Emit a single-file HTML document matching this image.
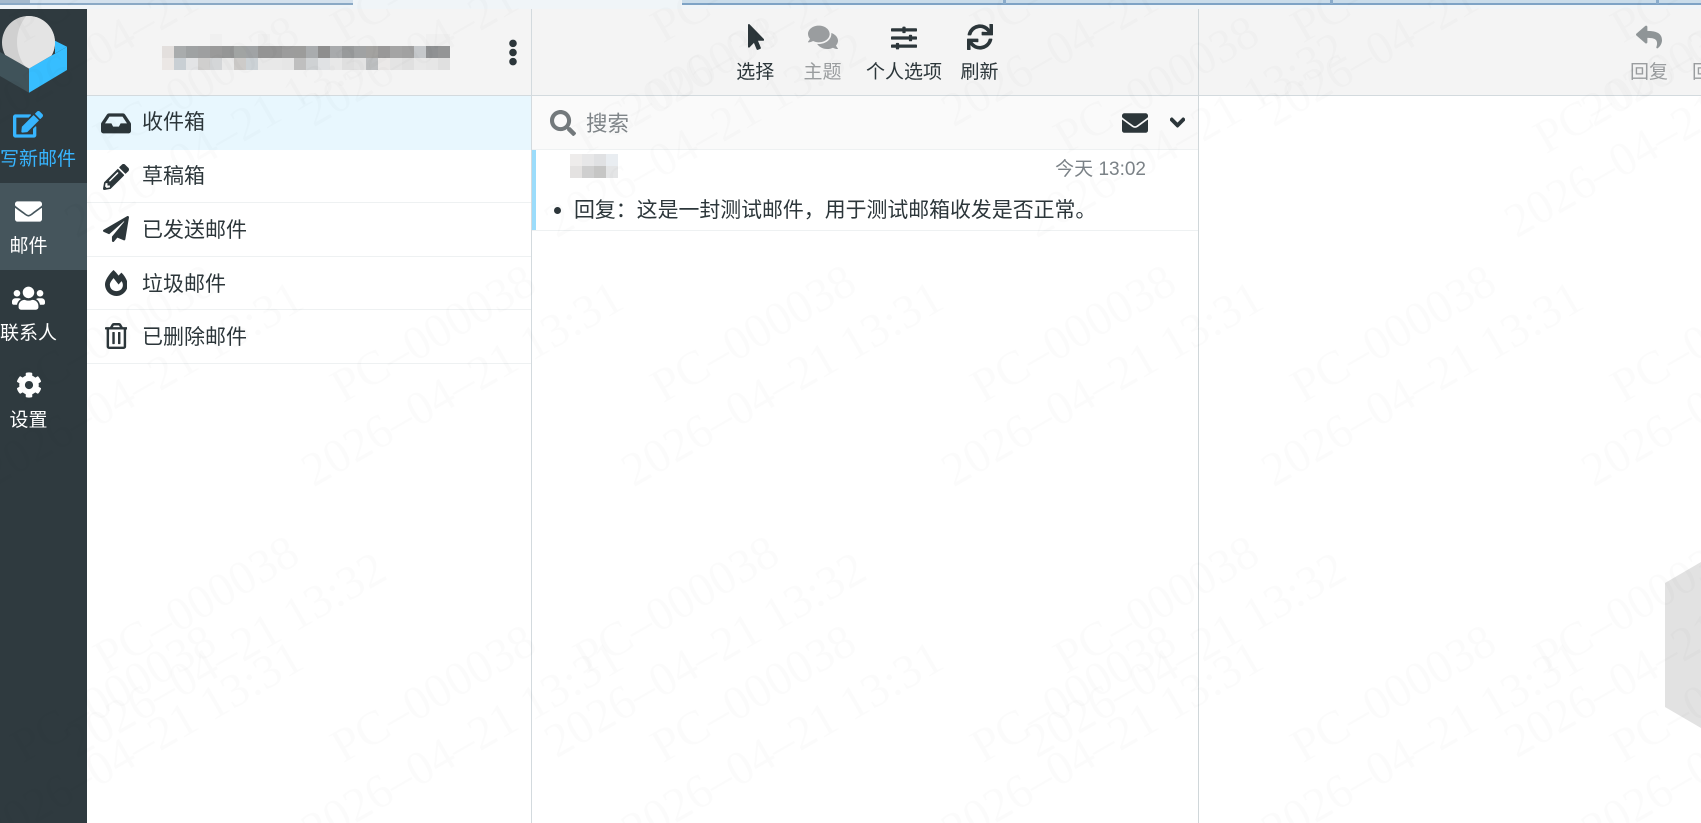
<!DOCTYPE html>
<html lang="zh"><head><meta charset="utf-8"><title>邮件</title>
<style>
html,body{margin:0;padding:0;width:1701px;height:823px;overflow:hidden;background:#fff}
body{position:relative;font-family:"Liberation Sans","Noto Sans CJK SC",sans-serif;color:#2c363a}
.a{position:absolute}
svg.i{position:absolute;display:block}
.t{position:absolute;line-height:24px;height:24px;white-space:nowrap;text-align:center}
.n{font-size:19px;color:#fff;left:0;width:57px;display:flex;justify-content:flex-start}
.n span{margin:auto;}
.f{font-size:21px;left:142px;text-align:left;color:#2c363a}
.b{font-size:19px;top:60.7px}
.d{color:#9a9d9f}
.r{position:absolute;left:87px;width:444px;height:1px;background:#eef1f2}
</style></head><body>
<!-- window top strip -->
<div class="a" style="left:0;top:0;width:1701px;height:9px;background:#f0f5f8"></div>
<div class="a" style="left:0;top:0;width:30px;height:3px;background:#a5bacd"></div>
<div class="a" style="left:30px;top:0;width:323px;height:3px;background:#d3e1ed"></div>
<div class="a" style="left:0;top:3px;width:353px;height:1.5px;background:#8aa9c5"></div>
<div class="a" style="left:682px;top:0;width:1019px;height:3px;background:#c9dcea"></div>
<div class="a" style="left:682px;top:3px;width:1019px;height:1.5px;background:#7ea3c5"></div>
<div class="a" style="left:1003px;top:0;width:3px;height:4px;background:#8aaccb"></div>
<div class="a" style="left:1330px;top:0;width:3px;height:4px;background:#8aaccb"></div>
<div class="a" style="left:1656px;top:0;width:3px;height:4px;background:#8aaccb"></div>

<!-- header bar -->
<div class="a" style="left:87px;top:9px;width:1614px;height:86px;background:#f4f4f4"></div>
<div class="a" style="left:87px;top:95px;width:1614px;height:1px;background:#d3dade"></div>

<!-- sidebar -->
<div class="a" style="left:0;top:9px;width:87px;height:814px;background:#2f3a3f"></div>
<div class="a" style="left:0;top:183px;width:87px;height:87px;background:#45555c"></div>

<svg class="i" style="left:0;top:0" width="87" height="100" viewBox="0 0 87 100">
<defs><clipPath id="cp"><polygon points="0,0 70,0 70,44.7 29,68.5 0,52"/></clipPath><clipPath id="cs"><circle cx="28.5" cy="42.5" r="26.5"/></clipPath></defs>
<polygon points="0,52 29,68.5 29,92.7 0,76" fill="#40535a"/>
<polygon points="29,68.5 67,46.7 67,70 29,92.7" fill="#37beff"/>
<polygon points="55,40.7 67,46.7 55,53.5" fill="#37beff"/>
<g clip-path="url(#cp)"><g clip-path="url(#cs)"><rect x="0" y="10" width="60" height="65" fill="#d0d0d0"/><circle cx="58" cy="42" r="41" fill="#e4e4e4"/></g></g>
</svg>

<svg class="i" style="left:13px;top:111px;fill:#37b5ff" width="30" height="26.7" viewBox="0 0 576 512"><path d="M402.6 83.2l90.2 90.2c3.8 3.8 3.8 10 0 13.8L274.4 405.6l-92.8 10.3c-12.4 1.4-22.9-9.1-21.5-21.5l10.3-92.8L388.8 83.2c3.8-3.8 10-3.8 13.8 0zm162-22.9l-48.8-48.8c-15.2-15.2-39.9-15.2-55.2 0l-35.4 35.4c-3.8 3.8-3.8 10 0 13.8l90.2 90.2c3.8 3.8 10 3.8 13.8 0l35.4-35.4c15.2-15.3 15.2-40 0-55.2zM384 346.2V448H64V128h229.8c3.2 0 6.2-1.3 8.5-3.5l40-40c7.6-7.6 2.2-20.5-8.5-20.5H48C21.5 64 0 85.5 0 112v352c0 26.5 21.5 48 48 48h352c26.5 0 48-21.5 48-48V306.2c0-10.7-12.9-16-20.5-8.5l-40 40c-2.2 2.3-3.5 5.3-3.5 8.5z"/></svg>
<div class="t" style="left:0;top:148px;font-size:19px;color:#37b5ff;text-align:left">写新邮件</div>

<svg class="i" style="left:15px;top:198px;fill:#fff" width="27" height="27" viewBox="0 0 512 512"><path d="M502.3 190.8c3.9-3.1 9.7-.2 9.7 4.7V400c0 26.5-21.5 48-48 48H48c-26.5 0-48-21.5-48-48V195.6c0-5 5.7-7.8 9.7-4.7 22.4 17.4 52.1 39.5 154.1 113.6 21.1 15.4 56.7 47.8 92.2 47.6 35.7.3 72-32.8 92.3-47.6 102-74.1 131.6-96.3 154-113.7zM256 320c23.2.4 56.6-29.2 73.4-41.4 132.7-96.3 142.8-104.7 173.4-128.7 5.8-4.5 9.2-11.5 9.2-18.9v-19c0-26.5-21.5-48-48-48H48C21.5 64 0 85.5 0 112v19c0 7.4 3.4 14.3 9.2 18.9 30.6 23.9 40.7 32.4 173.4 128.7 16.8 12.2 50.2 41.8 73.4 41.4z"/></svg>
<div class="t n" style="top:235px"><span>邮件</span></div>

<svg class="i" style="left:12px;top:285px;fill:#fff" width="33" height="26.4" viewBox="0 0 640 512"><path d="M96 224c35.3 0 64-28.7 64-64s-28.7-64-64-64-64 28.7-64 64 28.7 64 64 64zm448 0c35.3 0 64-28.7 64-64s-28.7-64-64-64-64 28.7-64 64 28.7 64 64 64zm32 32h-64c-17.6 0-33.5 7.1-45.1 18.6 40.3 22.1 68.9 62 75.1 109.4h66c17.7 0 32-14.3 32-32v-32c0-35.3-28.7-64-64-64zm-256 0c61.9 0 112-50.1 112-112S381.9 32 320 32 208 82.1 208 144s50.1 112 112 112zm76.8 32h-8.3c-20.8 10-43.9 16-68.5 16s-47.6-6-68.5-16h-8.3C179.6 288 128 339.6 128 403.2V432c0 26.5 21.5 48 48 48h288c26.5 0 48-21.5 48-48v-28.8c0-63.6-51.6-115.2-115.2-115.2zm-223.7-13.4C161.5 263.1 145.6 256 128 256H64c-35.3 0-64 28.7-64 64v32c0 17.7 14.3 32 32 32h65.9c6.3-47.4 34.9-87.3 75.2-109.4z"/></svg>
<div class="t n" style="top:322px"><span>联系人</span></div>

<svg class="i" style="left:15.5px;top:372px;fill:#fff" width="26" height="26" viewBox="0 0 512 512"><path d="M487.4 315.7l-42.6-24.6c4.3-23.2 4.3-47 0-70.2l42.6-24.6c4.9-2.8 7.1-8.6 5.5-14-11.1-35.6-30-67.8-54.7-94.6-3.8-4.1-10-5.1-14.8-2.3L380.8 110c-17.9-15.4-38.5-27.3-60.8-35.1V25.8c0-5.6-3.9-10.5-9.4-11.7-36.7-8.2-74.3-7.8-109.2 0-5.5 1.2-9.4 6.1-9.4 11.7V75c-22.2 7.9-42.8 19.8-60.8 35.1L88.7 85.5c-4.9-2.8-11-1.9-14.8 2.3-24.7 26.7-43.6 58.9-54.7 94.6-1.7 5.4.6 11.2 5.5 14L67.3 221c-4.3 23.2-4.3 47 0 70.2l-42.6 24.6c-4.9 2.8-7.1 8.6-5.5 14 11.1 35.6 30 67.8 54.7 94.6 3.8 4.1 10 5.1 14.8 2.3l42.6-24.6c17.9 15.4 38.5 27.3 60.8 35.1v49.2c0 5.6 3.9 10.5 9.4 11.7 36.7 8.2 74.3 7.8 109.2 0 5.5-1.2 9.4-6.1 9.4-11.7v-49.2c22.2-7.9 42.8-19.8 60.8-35.1l42.6 24.6c4.9 2.8 11 1.9 14.8-2.3 24.7-26.7 43.6-58.9 54.7-94.6 1.5-5.5-.7-11.3-5.6-14.1zM256 336c-44.1 0-80-35.9-80-80s35.9-80 80-80 80 35.9 80 80-35.9 80-80 80z"/></svg>
<div class="t n" style="top:409px"><span>设置</span></div>

<!-- account mosaic -->
<svg class="i" style="left:162px;top:34px" width="288" height="36" viewBox="0 0 24 3" shape-rendering="crispEdges">
<rect x="4" width="1" height="1" fill="#f0f0f0"/><rect x="8" width="1" height="1" fill="#f0f0f0"/><rect x="22" width="2" height="1" fill="#f0f0f0"/>
<rect x="0" y="1" width="1" height="1" fill="#e3dfdd"/><rect x="1" y="1" width="1" height="1" fill="#a9acad"/><rect x="2" y="1" width="1" height="1" fill="#9fa2a3"/><rect x="3" y="1" width="1" height="1" fill="#9e9fa0"/><rect x="4" y="1" width="1" height="1" fill="#9a9a9a"/><rect x="5" y="1" width="1" height="1" fill="#959696"/><rect x="6" y="1" width="1" height="1" fill="#a1a4a3"/><rect x="7" y="1" width="1" height="1" fill="#a0a3a5"/><rect x="8" y="1" width="1" height="1" fill="#949494"/><rect x="9" y="1" width="1" height="1" fill="#959595"/><rect x="10" y="1" width="1" height="1" fill="#9c9c9c"/><rect x="11" y="1" width="1" height="1" fill="#9c9c9b"/><rect x="12" y="1" width="1" height="1" fill="#a9acae"/><rect x="13" y="1" width="1" height="1" fill="#8e8e8e"/><rect x="14" y="1" width="1" height="1" fill="#a8aaac"/><rect x="15" y="1" width="1" height="1" fill="#989a9b"/><rect x="16" y="1" width="1" height="1" fill="#a0a2a3"/><rect x="17" y="1" width="1" height="1" fill="#a3a2a0"/><rect x="18" y="1" width="1" height="1" fill="#999898"/><rect x="19" y="1" width="1" height="1" fill="#a4a4a4"/><rect x="20" y="1" width="1" height="1" fill="#a1a1a1"/><rect x="21" y="1" width="1" height="1" fill="#c5c8cb"/><rect x="22" y="1" width="1" height="1" fill="#8f9193"/><rect x="23" y="1" width="1" height="1" fill="#949596"/>
<rect x="0" y="2" width="1" height="1" fill="#ebe7e5"/><rect x="1" y="2" width="1" height="1" fill="#c9cfd4"/><rect x="2" y="2" width="1" height="1" fill="#e3e4e6"/><rect x="3" y="2" width="1" height="1" fill="#d0cfce"/><rect x="4" y="2" width="1" height="1" fill="#d4d6d8"/><rect x="5" y="2" width="1" height="1" fill="#e9e9e9"/><rect x="6" y="2" width="1" height="1" fill="#cdcbc9"/><rect x="7" y="2" width="1" height="1" fill="#ccd2d6"/><rect x="8" y="2" width="1" height="1" fill="#e8e8e8"/><rect x="9" y="2" width="1" height="1" fill="#e8e8e8"/><rect x="10" y="2" width="1" height="1" fill="#e6e6e6"/><rect x="11" y="2" width="1" height="1" fill="#bfbfbf"/><rect x="12" y="2" width="1" height="1" fill="#cfd2d4"/><rect x="13" y="2" width="1" height="1" fill="#e0e2e4"/><rect x="14" y="2" width="1" height="1" fill="#e8e8e8"/><rect x="15" y="2" width="1" height="1" fill="#dfdfdf"/><rect x="16" y="2" width="1" height="1" fill="#e3e3e3"/><rect x="17" y="2" width="1" height="1" fill="#bdbfc1"/><rect x="18" y="2" width="1" height="1" fill="#ebe9e8"/><rect x="19" y="2" width="1" height="1" fill="#e4e4e4"/><rect x="20" y="2" width="1" height="1" fill="#e0e0e0"/><rect x="21" y="2" width="1" height="1" fill="#e8e8e8"/><rect x="22" y="2" width="1" height="1" fill="#e6e6e6"/><rect x="23" y="2" width="1" height="1" fill="#e0e0e0"/>
</svg>
<svg class="i" style="left:507.7px;top:39px;fill:#2c363a" width="10" height="27" viewBox="0 0 192 512"><path d="M96 184c39.8 0 72 32.2 72 72s-32.2 72-72 72-72-32.2-72-72 32.2-72 72-72zM24 80c0 39.8 32.2 72 72 72s72-32.2 72-72S135.8 8 96 8 24 40.2 24 80zm0 352c0 39.8 32.2 72 72 72s72-32.2 72-72-32.2-72-72-72-72 32.2-72 72z"/></svg>

<!-- folder list -->
<div class="a" style="left:87px;top:96px;width:444px;height:54px;background:#e8f7fe"></div>
<div class="r" style="top:202px"></div>
<div class="r" style="top:256px"></div>
<div class="r" style="top:309px"></div>
<div class="r" style="top:363px"></div>

<svg class="i" style="left:101px;top:109.5px;fill:#2c363a" width="30" height="26.7" viewBox="0 0 576 512"><path d="M567.938 243.908L462.25 85.374A48.003 48.003 0 0 0 422.311 64H153.689a48 48 0 0 0-39.938 21.374L8.062 243.908A47.994 47.994 0 0 0 0 270.533V400c0 26.51 21.49 48 48 48h480c26.51 0 48-21.49 48-48V270.533a47.994 47.994 0 0 0-8.062-26.625zM162.252 128h251.497l85.333 128H376l-32 64H232l-32-64H76.918l85.334-128z"/></svg>
<div class="t f" style="top:111px">收件箱</div>

<svg class="i" style="left:103px;top:163.5px;fill:#2c363a" width="26" height="26" viewBox="0 0 512 512"><path d="M497.9 142.1l-46.1 46.1c-4.7 4.7-12.3 4.7-17 0l-111-111c-4.7-4.7-4.7-12.3 0-17l46.1-46.1c18.7-18.7 49.1-18.7 67.9 0l60.1 60.1c18.8 18.7 18.8 49.1 0 67.9zM284.2 99.8L21.6 362.4.4 483.9c-2.9 16.4 11.4 30.6 27.8 27.8l121.5-21.3 262.6-262.6c4.7-4.7 4.7-12.3 0-17l-111-111c-4.8-4.7-12.4-4.7-17.1 0zM124.1 339.9c-5.5-5.5-5.5-14.3 0-19.8l154-154c5.5-5.5 14.3-5.5 19.8 0s5.5 14.3 0 19.8l-154 154c-5.5 5.5-14.3 5.5-19.8 0zM88 424h48v36.3l-64.5 11.3-31.1-31.1L51.7 376H88v48z"/></svg>
<div class="t f" style="top:165px">草稿箱</div>

<svg class="i" style="left:103px;top:216px;fill:#2c363a" width="26" height="26" viewBox="0 0 512 512"><path d="M476 3.2L12.5 270.6c-18.1 10.4-15.8 35.6 2.2 43.2L121 358.4l287.3-253.2c5.5-4.9 13.3 2.6 8.6 8.3L176 407v80.5c0 23.6 28.5 32.9 42.5 15.8L282 426l124.6 52.2c14.2 6 30.4-2.9 33-18.2l72-432C515 7.8 493.3-6.8 476 3.2z"/></svg>
<div class="t f" style="top:219px">已发送邮件</div>

<svg class="i" style="left:104.5px;top:270px;fill:#2c363a" width="22.75" height="26" viewBox="0 0 448 512"><path d="M323.56 51.2c-20.8 19.3-39.58 39.59-56.22 59.97C240.08 73.62 206.28 35.53 168 0 69.74 91.17 0 209.96 0 281.6 0 408.85 100.29 512 224 512s224-103.15 224-230.4c0-53.27-51.98-163.14-124.44-230.4zm-19.47 340.65C282.43 407.01 255.72 416 226.86 416 154.71 416 96 368.26 96 290.75c0-38.61 24.31-72.63 72.79-130.75 6.93 7.98 98.83 125.34 98.83 125.34l58.63-66.88c4.14 6.85 7.91 13.55 11.27 19.97 27.35 52.19 15.81 118.97-33.43 153.42z"/></svg>
<div class="t f" style="top:273px">垃圾邮件</div>

<svg class="i" style="left:104.5px;top:323px;fill:#2c363a" width="22.75" height="26" viewBox="0 0 448 512"><path d="M268 416h24a12 12 0 0 0 12-12V188a12 12 0 0 0-12-12h-24a12 12 0 0 0-12 12v216a12 12 0 0 0 12 12zM432 80h-82.41l-34-56.7A48 48 0 0 0 274.41 0H173.59a48 48 0 0 0-41.16 23.3L98.41 80H16A16 16 0 0 0 0 96v16a16 16 0 0 0 16 16h16v336a48 48 0 0 0 48 48h288a48 48 0 0 0 48-48V128h16a16 16 0 0 0 16-16V96a16 16 0 0 0-16-16zM171.84 50.91A6 6 0 0 1 177 48h94a6 6 0 0 1 5.15 2.91L293.61 80H154.39zM368 464H80V128h288zm-212-48h24a12 12 0 0 0 12-12V188a12 12 0 0 0-12-12h-24a12 12 0 0 0-12 12v216a12 12 0 0 0 12 12z"/></svg>
<div class="t f" style="top:325.7px">已删除邮件</div>

<!-- middle toolbar -->
<svg class="i" style="left:747.5px;top:24px;fill:#2c363a" width="16.25" height="26" viewBox="0 0 320 512"><path d="M302.189 329.126H196.105l55.831 135.993c3.889 9.428-.555 19.999-9.444 23.999l-49.165 21.427c-9.165 4-19.443-.571-23.332-9.714l-53.053-129.136-86.664 89.138C18.729 472.71 0 463.554 0 447.977V18.299C0 1.899 19.921-6.096 30.277 5.443l284.412 292.542c11.472 11.179 3.007 31.141-12.5 31.141z"/></svg>
<div class="t b" style="left:725.3px;width:60px">选择</div>
<svg class="i" style="left:808px;top:24.3px;fill:#9a9d9f" width="30" height="26.7" viewBox="0 0 576 512"><path d="M416 192c0-88.4-93.1-160-208-160S0 103.6 0 192c0 34.3 14.1 65.9 38 92-13.4 30.2-35.5 54.2-35.8 54.5-2.2 2.3-2.8 5.7-1.5 8.7S4.8 352 8 352c36.6 0 66.9-12.3 88.7-25 32.2 15.7 70.3 25 111.3 25 114.9 0 208-71.6 208-160zm122 220c23.9-26 38-57.7 38-92 0-66.9-53.5-124.2-129.3-148.1.9 6.6 1.3 13.3 1.3 20.1 0 105.9-107.7 192-240 192-10.8 0-21.3-.8-31.7-1.9C207.8 439.6 281.8 480 368 480c41 0 79.1-9.2 111.3-25 21.8 12.7 52.1 25 88.7 25 3.2 0 6.1-1.9 7.3-4.8 1.3-2.9.7-6.3-1.5-8.7-.3-.3-22.4-24.2-35.8-54.5z"/></svg>
<div class="t b d" style="left:792.5px;width:60px">主题</div>
<svg class="i" style="left:890.7px;top:24.7px;fill:#2c363a" width="26" height="26" viewBox="0 0 512 512"><path d="M496 384H160v-16c0-8.8-7.2-16-16-16h-32c-8.8 0-16 7.2-16 16v16H16c-8.8 0-16 7.2-16 16v32c0 8.8 7.2 16 16 16h80v16c0 8.8 7.2 16 16 16h32c8.8 0 16-7.2 16-16v-16h336c8.8 0 16-7.2 16-16v-32c0-8.8-7.2-16-16-16zm0-160h-80v-16c0-8.8-7.2-16-16-16h-32c-8.8 0-16 7.2-16 16v16H16c-8.8 0-16 7.2-16 16v32c0 8.8 7.2 16 16 16h336v16c0 8.8 7.2 16 16 16h32c8.8 0 16-7.2 16-16v-16h80c8.8 0 16-7.2 16-16v-32c0-8.8-7.2-16-16-16zm0-160H288V48c0-8.8-7.2-16-16-16h-32c-8.8 0-16 7.2-16 16v16H16C7.2 64 0 71.2 0 80v32c0 8.8 7.2 16 16 16h208v16c0 8.8 7.2 16 16 16h32c8.8 0 16-7.2 16-16v-16h208c8.8 0 16-7.2 16-16V80c0-8.8-7.2-16-16-16z"/></svg>
<div class="t b" style="left:864px;width:80px">个人选项</div>
<svg class="i" style="left:966.7px;top:24px;fill:#2c363a" width="26" height="26" viewBox="0 0 512 512"><path d="M440.65 12.57l4 82.77A247.16 247.16 0 0 0 255.83 8C134.73 8 33.91 94.92 12.29 209.82A12 12 0 0 0 24.09 224h49.05a12 12 0 0 0 11.67-9.26 175.91 175.91 0 0 1 317-56.94l-101.46-4.86a12 12 0 0 0-12.57 12v47.41a12 12 0 0 0 12 12H500a12 12 0 0 0 12-12V12a12 12 0 0 0-12-12h-47.37a12 12 0 0 0-11.98 12.57zM255.83 432a175.61 175.61 0 0 1-146-77.8l101.8 4.87a12 12 0 0 0 12.57-12v-47.4a12 12 0 0 0-12-12H12a12 12 0 0 0-12 12V500a12 12 0 0 0 12 12h47.35a12 12 0 0 0 12-12.6l-4.15-82.57A247.17 247.17 0 0 0 255.83 504c121.11 0 221.93-86.92 243.55-201.82a12 12 0 0 0-11.8-14.18h-49.05a12 12 0 0 0-11.67 9.26A175.86 175.86 0 0 1 255.83 432z"/></svg>
<div class="t b" style="left:949.5px;width:60px">刷新</div>

<!-- right toolbar -->
<svg class="i" style="left:1636px;top:24px;fill:#8f9597" width="26" height="26" viewBox="0 0 512 512"><path d="M8.309 189.836L184.313 37.851C199.719 24.546 224 35.347 224 56.015v80.053c160.629 1.839 288 34.032 288 186.258 0 61.441-39.581 122.309-83.333 154.132-13.653 9.931-33.111-2.533-28.077-18.631 45.344-145.012-21.507-183.51-176.59-185.742V360c0 20.7-24.3 31.453-39.687 18.164l-176.004-152c-11.071-9.562-11.086-26.753 0-36.328z"/></svg>
<div class="t b d" style="left:1619px;width:60px">回复</div>
<div class="t b d" style="left:1692px;text-align:left">回复全部</div>

<!-- search row -->
<div class="a" style="left:532px;top:96px;width:666px;height:53px;background:#fafafa"></div>
<div class="a" style="left:532px;top:149px;width:666px;height:1px;background:#eef1f2"></div>
<svg class="i" style="left:549.5px;top:110px;fill:#73797c" width="26" height="26" viewBox="0 0 512 512"><path d="M505 442.7L405.3 343c-4.5-4.5-10.6-7-17-7H372c27.6-35.3 44-79.7 44-128C416 93.1 322.9 0 208 0S0 93.1 0 208s93.1 208 208 208c48.3 0 92.7-16.4 128-44v16.3c0 6.4 2.5 12.5 7 17l99.7 99.7c9.4 9.4 24.6 9.4 33.9 0l28.3-28.3c9.4-9.4 9.4-24.6.1-34zM208 336c-70.7 0-128-57.2-128-128 0-70.7 57.2-128 128-128 70.7 0 128 57.2 128 128 0 70.7-57.2 128-128 128z"/></svg>
<div class="t" style="left:586px;top:111.7px;font-size:21.5px;color:#7f8589;text-align:left">搜索</div>
<svg class="i" style="left:1122px;top:110px;fill:#2c363a" width="26" height="26" viewBox="0 0 512 512"><path d="M502.3 190.8c3.9-3.1 9.7-.2 9.7 4.7V400c0 26.5-21.5 48-48 48H48c-26.5 0-48-21.5-48-48V195.6c0-5 5.7-7.8 9.7-4.7 22.4 17.4 52.1 39.5 154.1 113.6 21.1 15.4 56.7 47.8 92.2 47.6 35.7.3 72-32.8 92.3-47.6 102-74.1 131.6-96.3 154-113.7zM256 320c23.2.4 56.6-29.2 73.4-41.4 132.7-96.3 142.8-104.7 173.4-128.7 5.8-4.5 9.2-11.5 9.2-18.9v-19c0-26.5-21.5-48-48-48H48C21.5 64 0 85.5 0 112v19c0 7.4 3.4 14.3 9.2 18.9 30.6 23.9 40.7 32.4 173.4 128.7 16.8 12.2 50.2 41.8 73.4 41.4z"/></svg>
<svg class="i" style="left:1170px;top:114px;fill:#2c363a;stroke:#2c363a;stroke-width:36" width="15" height="17" viewBox="0 0 448 512"><path d="M207.029 381.476L12.686 187.132c-9.373-9.373-9.373-24.569 0-33.941l22.667-22.667c9.357-9.357 24.522-9.375 33.901-.04L224 284.505l154.745-154.021c9.379-9.335 24.544-9.317 33.901.04l22.667 22.667c9.373 9.373 9.373 24.569 0 33.941L240.971 381.476c-9.373 9.372-24.569 9.372-33.942 0z"/></svg>

<!-- message row -->
<div class="a" style="left:532px;top:150px;width:3.5px;height:81px;background:#9bdcfb"></div>
<div class="a" style="left:532px;top:230px;width:666px;height:1px;background:#eef1f2"></div>
<svg class="i" style="left:570px;top:154px" width="48" height="24" viewBox="0 0 4 2" shape-rendering="crispEdges">
<rect x="0" y="0" width="1" height="1" fill="#eeeceb"/><rect x="1" y="0" width="1" height="1" fill="#e7e7e8"/><rect x="2" y="0" width="1" height="1" fill="#e0e1e3"/><rect x="3" y="0" width="1" height="1" fill="#e9edf1"/>
<rect x="0" y="1" width="1" height="1" fill="#e4e2e1"/><rect x="1" y="1" width="1" height="1" fill="#cfcfcf"/><rect x="2" y="1" width="1" height="1" fill="#c6c6c5"/><rect x="3" y="1" width="1" height="1" fill="#e4e5e6"/>
</svg>
<div class="t" style="left:1001px;width:145px;top:158px;font-size:19px;color:#7b8287;text-align:right">今天 13:02</div>
<div class="a" style="left:553.5px;top:206.5px;width:7px;height:7px;border-radius:50%;background:#2c363a"></div>
<div class="t" style="left:574px;top:199px;font-size:20.9px;text-align:left;color:#2c363a">回复：这是一封测试邮件，用于测试邮箱收发是否正常。</div>

<!-- column dividers -->
<div class="a" style="left:531px;top:9px;width:1px;height:814px;background:#d3dade"></div>
<div class="a" style="left:1198px;top:9px;width:1px;height:814px;background:#d0d7da"></div>

<!-- right pane background logo -->
<svg class="i" style="left:1660px;top:550px" width="41" height="190" viewBox="1660 550 41 190"><polygon points="1665,583 1701,562 1701,728 1665,707" fill="#e2e2e2"/></svg>

<!-- watermark overlay -->
<svg class="i" style="left:0;top:0;pointer-events:none" width="1701" height="823" viewBox="0 0 1701 823" font-family="'Liberation Serif',serif" font-size="48" fill="#000" fill-opacity=".016" text-anchor="middle" xml:space="preserve">
<g transform="translate(204,618) rotate(-30)"><text>PC–000038</text><text y="58">2026–04–21   13:32</text></g>
<g transform="translate(684,618) rotate(-30)"><text>PC–000038</text><text y="58">2026–04–21   13:32</text></g>
<g transform="translate(1164,618) rotate(-30)"><text>PC–000038</text><text y="58">2026–04–21   13:32</text></g>
<g transform="translate(1644,618) rotate(-30)"><text>PC–000038</text><text y="58">2026–04–21   13:32</text></g>
<g transform="translate(204,98) rotate(-30)"><text>PC–000038</text><text y="58">2026–04–21   13:32</text></g>
<g transform="translate(684,98) rotate(-30)"><text>PC–000038</text><text y="58">2026–04–21   13:32</text></g>
<g transform="translate(1164,98) rotate(-30)"><text>PC–000038</text><text y="58">2026–04–21   13:32</text></g>
<g transform="translate(1644,98) rotate(-30)"><text>PC–000038</text><text y="58">2026–04–21   13:32</text></g>
<g transform="translate(121,707) rotate(-30)"><text>PC–000038</text><text y="58">2026–04–21   13:31</text></g>
<g transform="translate(441,707) rotate(-30)"><text>PC–000038</text><text y="58">2026–04–21   13:31</text></g>
<g transform="translate(761,707) rotate(-30)"><text>PC–000038</text><text y="58">2026–04–21   13:31</text></g>
<g transform="translate(1081,707) rotate(-30)"><text>PC–000038</text><text y="58">2026–04–21   13:31</text></g>
<g transform="translate(1401,707) rotate(-30)"><text>PC–000038</text><text y="58">2026–04–21   13:31</text></g>
<g transform="translate(1721,707) rotate(-30)"><text>PC–000038</text><text y="58">2026–04–21   13:31</text></g>
<g transform="translate(121,347) rotate(-30)"><text>PC–000038</text><text y="58">2026–04–21   13:31</text></g>
<g transform="translate(441,347) rotate(-30)"><text>PC–000038</text><text y="58">2026–04–21   13:31</text></g>
<g transform="translate(761,347) rotate(-30)"><text>PC–000038</text><text y="58">2026–04–21   13:31</text></g>
<g transform="translate(1081,347) rotate(-30)"><text>PC–000038</text><text y="58">2026–04–21   13:31</text></g>
<g transform="translate(1401,347) rotate(-30)"><text>PC–000038</text><text y="58">2026–04–21   13:31</text></g>
<g transform="translate(1721,347) rotate(-30)"><text>PC–000038</text><text y="58">2026–04–21   13:31</text></g>
<g transform="translate(121,-13) rotate(-30)"><text>PC–000038</text><text y="58">2026–04–21   13:31</text></g>
<g transform="translate(441,-13) rotate(-30)"><text>PC–000038</text><text y="58">2026–04–21   13:31</text></g>
<g transform="translate(761,-13) rotate(-30)"><text>PC–000038</text><text y="58">2026–04–21   13:31</text></g>
<g transform="translate(1081,-13) rotate(-30)"><text>PC–000038</text><text y="58">2026–04–21   13:31</text></g>
<g transform="translate(1401,-13) rotate(-30)"><text>PC–000038</text><text y="58">2026–04–21   13:31</text></g>
<g transform="translate(1721,-13) rotate(-30)"><text>PC–000038</text><text y="58">2026–04–21   13:31</text></g>
</svg>
</body></html>
